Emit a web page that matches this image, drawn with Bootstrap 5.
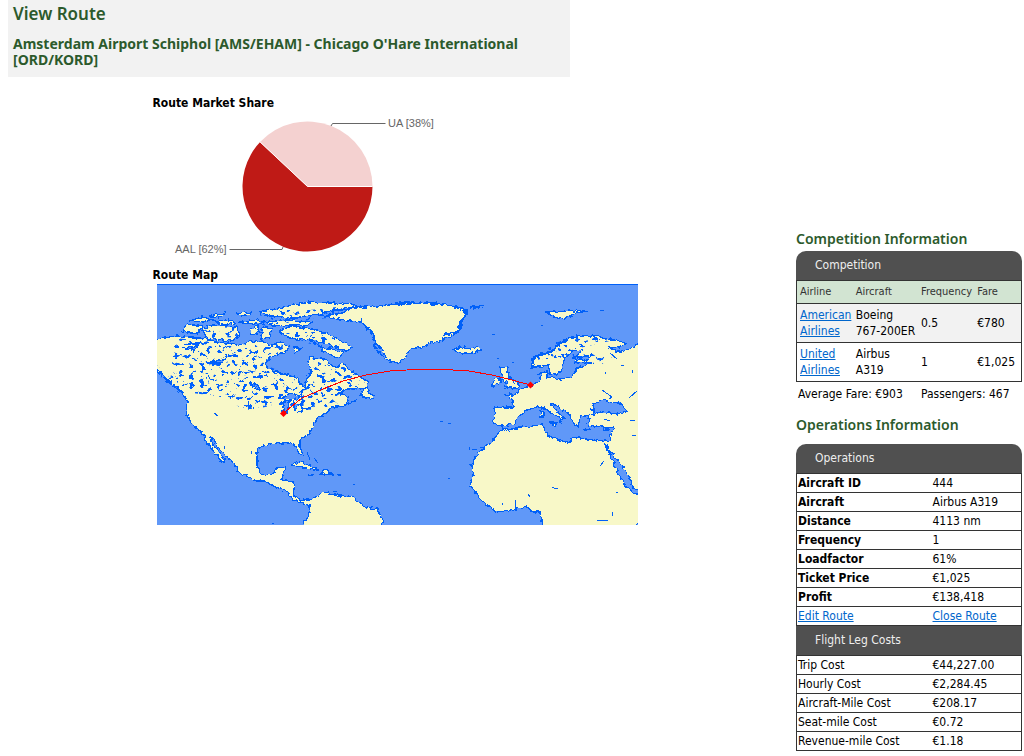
<!DOCTYPE html>
<html lang="en">
<head>
<meta charset="utf-8">
<meta name="viewport" content="width=device-width, initial-scale=1">
<title>View Route</title>
<link href="https://cdn.jsdelivr.net/npm/bootstrap@5.3.0/dist/css/bootstrap.min.css" rel="stylesheet">
<style>
body{font-family:"DejaVu Sans Condensed","DejaVu Sans",sans-serif;font-size:12px;line-height:16px;color:#000}
h1,h2,h3{font-family:"Noto Sans",sans-serif;font-weight:600;color:#2c5a2c;margin:0}
h1{font-size:17px;line-height:20px}
h2,h3{font-size:14px;line-height:16px}
h2{font-weight:700}
h4{font-size:12px;line-height:14px;font-weight:700;margin:0}
a{color:#06c}
.route-head{background:#f2f2f2;width:55%;min-width:562px;padding:4px 5px 9px}
.route-head h2{margin-top:12px}
.route-body{padding-top:19px}
.route-visuals{padding-right:10px}
.visuals{width:489px}
.visuals svg{display:block;max-width:100%}
.map-title{padding:2px 0}
.side{width:226px;padding-top:135px;margin-right:2px}
.ops-title{padding:15px 0 11px}
.bar{background:#505050;color:#eee;height:29px;line-height:29px;padding-left:19px}
.bar-top{border-radius:10px 10px 0 0}
.grid{width:100%;border-collapse:collapse;border:1px solid #333;table-layout:fixed}
.grid tr{border:1px solid #333}
.grid th,.grid td{padding:1px 0 1px 1px;height:19px;vertical-align:middle}
.fares th{font-weight:400;font-size:11px;color:#333;background:#d2e4d2;height:23px}
.fares th,.fares td{padding:3px 0 3px 3px}
.fares tr.odd td{background:#f2f2f2}
.totals{padding:4px 0 0 2px;gap:11px}
</style>
</head>
<body>
<main class="ps-2 pe-0">
<header class="route-head">
<h1>View Route</h1>
<h2>Amsterdam Airport Schiphol [AMS/EHAM] - Chicago O'Hare International [ORD/KORD]</h2>
</header>
<div class="route-body d-flex align-items-start">
<section class="route-visuals flex-fill d-flex justify-content-center">
<div class="visuals">
<h4>Route Market Share</h4>
<svg width="489" height="156" viewBox="153 110 489 156" role="img" aria-label="Market share pie chart">
<path d="M307.500 186.500H372.500A65 65 0 1 1 260.100 142z" fill="#bf1a16"/>
<path d="M307.500 186.500L260.100 142A65 65 0 0 1 372.500 186.500z" fill="#f4d1d0"/>
<path d="M372.500 186.500H307.500L260.100 142" fill="none" stroke="#fff"/>
<path d="M331 126l1.500-2.500H385.500M229.500 249.500H282l1-2.500" fill="none" stroke="#666"/>
<g font-family="Liberation Sans,sans-serif" font-size="11" fill="#666"><text x="388" y="127">UA [38%]</text><text x="175" y="253">AAL [62%]</text></g>
</svg>
<h4 class="map-title">Route Map</h4>
<svg class="ms-1" width="481" height="241" viewBox="157 284 481 241" role="img" aria-label="Map of the route from Amsterdam to Chicago">
<defs>
<filter id="rough" x="157" y="284" width="481" height="241" filterUnits="userSpaceOnUse"><feTurbulence type="fractalNoise" baseFrequency=".25" numOctaves="2" seed="4"/><feDisplacementMap in="SourceGraphic" scale="5" xChannelSelector="R" yChannelSelector="G"/></filter>
<filter id="lakes" x="157" y="284" width="481" height="241" filterUnits="userSpaceOnUse" color-interpolation-filters="sRGB"><feTurbulence type="fractalNoise" baseFrequency=".19 .24" numOctaves="3" seed="8"/><feColorMatrix values="0 0 0 0 0  0 0 0 0 .376  0 0 0 0 1  30 0 0 0 -18"/><feComposite in2="SourceGraphic" operator="in"/></filter>
</defs>
<path d="M157 284h481v241H157z" fill="#6098f8"/>
<g fill="#f8f8c8" stroke="#0060f8" stroke-width="1.300" shape-rendering="crispEdges">
<g filter="url(#rough)">
<path d="M150 339L165 338L178 336L190 338L203 338L215 342L228 343L240 346L250 341L262 342L272 345L282 342L290 346L285 352L277 354L272 357L265 363L266 367L272 370L287 375L298 378L300 385L305 387L307 378L312 372L308 362L310 357L317 358L327 360L330 364L337 368L343 363L350 370L360 377L368 382L367 388L347 389L335 396L343 393L348 398L345 404L357 400L343 406L330 408L327 413L318 417L315 423L310 433L300 440L300 447L303 455L298 453L297 447L292 443L277 443L263 445L257 450L257 465L260 472L265 475L273 474L277 468L285 467L282 480L293 482L294 497L300 500L310 500L317 496L325 492L335 495L353 497L365 507L377 509L383 520L382 530H300L308 517L310 506L302 503L293 500L288 492L273 486L265 481L257 481L247 476L237 472L236 465L227 457L218 448L215 440L211 438L213 445L219 452L225 461L222 462L215 453L207 443L203 433L190 422L186 413L187 400L183 395L177 388L170 383L162 375L150 366z"/>
<path d="M323 316L342 313L353 308L377 306L400 303L427 302L443 304L457 307L467 313L460 323L457 333L443 340L430 343L423 347L410 349L405 358L398 363L387 360L382 350L375 342L370 330L360 322L343 320z"/>
<path d="M183 331l4-7 16 3-6 7zM202 329l12-4 23 2 3 8-8 6-25-3zM249 331l8-6 3 7-8 2zM190 321l12-4 10 3-9 2zM208 316l17-3-4 4zM215 322l14-2 6 3-13 2zM236 313l16-1-7 4zM239 322l20-2 3 3-14 1zM263 322l25-2 24 2-7 4-32-1zM260 312l23-5 27-5 43 2 4 3-26 4-21 5-20 2-25-3zM263 327l9 2-3 8-8 2zM279 332l11-6 21 3 14 4 28 14-6 4-17-6-17-5-18-1-9-3zM293 347l8 2-6 4zM320 347l23 5-3 6-17-6z"/>
<path d="M453 350L460 347L470 349L478 347L481 350L472 353L462 354zM470 307l14-1-9 2zM545 312l13 0 10-2 20 1-13 2-5 3-8 3-9-3z"/>
<path d="M645 340L633 347L625 351L617 352L610 348L620 347L626 343L613 340L597 336L577 336L563 342L552 352L532 358L532 367L540 367L548 365L550 373L558 375L562 367L565 358L575 349L583 350L575 357L576 362L592 363L577 368L572 377L560 379L548 377L547 372L540 373L541 380L532 385L520 390L513 395L505 395L513 400L513 408L495 407L493 423L502 426L515 424L518 417L527 410L537 407L545 408L552 413L561 419L560 423L564 417L550 405L553 403L568 413L573 422L578 428L580 417L590 415L588 425L603 427L613 427L610 440L603 441L593 440L573 437L568 443L547 435L543 425L520 427L508 430L502 428L492 442L478 452L472 465L473 477L470 485L483 502L497 512L528 507L532 512L540 512L544 530H632L645 515z"/>
<path d="M500 368l8-1-1 6 5 7 8 5-2 3-13 0 3-4-5-4zM492 380l6-3 3 5-8 4zM360 395l5-8 4 6 6 4-4 2zM290 465l10-3 18 7-8 1-10-4zM320 474l5-5 8 5zM308 475h5M337 475h5"/>
<path d="M540 410l3 1v6h-2zM551 423h7l-2 3zM583 430h7M604 430l5-1-3 2z"/>
<path fill="#6098f8" d="M593 405L602 399L610 403L618 401L627 411L617 414L603 412L593 414zM604 442L608 449L620 463L630 478L633 488L645 490V496L633 493L623 482L617 470zM183 348l15-2-4 5zM207 362l20-3-6 4zM249 382l9 3 2 4-8-2zM283 412l1-10 6-2-3 12zM282 398l8-5 12 4-7 3zM292 401l6 4-3 6zM296 413l9-4M306 409l9-4M572 358l20-3-6 6z"/>
</g>
</g>
<path filter="url(#lakes)" d="M175 338l65 7 42-3 3 10-13 5-7 8 33 13 2 7 5 2 10-14-3-15 35 10 18 15-1 6-20 2-12 8 8 7-18 4-37-1-11-4-27 6-30-15-25-3-22-10zM260 310h50l45-5-20 12-40 5-35 4zM203 328l34-1 1 10-30 1zM280 332h44l24 15h-30zM533 360l22-18 45-6 10 5-35 8-12 10zM572 352l40 5-10 7h-27zM157 365l26 25 4 8-17-10-13-15z"/>
<g fill="none" stroke="#0060f8" shape-rendering="crispEdges">
<path d="M157 284.500h481" />
<path d="M360 321l14 14 1 12 8 10M455 307l12 4-5 11-4 10-15 3M385 305l25-2 36 1M532 366l2-9 18-6 12-11 15-4h20M157 368l13 15 13 9" stroke-width="2" filter="url(#rough)"/>
<path d="M440 421h3m5 2h3M469 447v3m3-1h5m3-2h4M448 478h2M353 484h2m-22 7h4M272 523h2M307 452l3 8m4-2l4 5M214 413l4 3M248 401v4m5 2v2M224 446v3m27 2v3M208 375l2 4M228 396h4M552 487l4 2 2-1M528 494l2 3M515 500v8M502 503v2M600 466l4-5M616 492h2M612 512v4M597 520h5M541 325h2M497 358h2M512 362h2M600 310h4M492 334h3M602 390l10 7-3 2M629 398l8-7M610 353l7 6m4 6h3m8 5v3M605 372v2M600 520l8 1M630 420h5M632 435h4M604 419l6 2"/>
<path d="M283.500 413L302 398L323 389L343 381L366 375L390 371L415 369.500H440L466 370.500L492 375L512 380L530.500 385" stroke="red" stroke-width="1"/>
</g>
<path d="M280 413.500l3.500-3.500 3.500 3.500-3.500 3.500zM527 385l3.500-3.500 3.500 3.500-3.500 3.500z" fill="red"/>
</svg>
</div>
</section>
<aside class="side flex-shrink-0">
<h3>Competition Information</h3>
<div class="bar bar-top mt-1">Competition</div>
<table class="grid fares">
<colgroup><col style="width:25%"><col style="width:29%"><col style="width:25%"><col style="width:21%"></colgroup>
<thead><tr><th scope="col">Airline</th><th scope="col">Aircraft</th><th scope="col">Frequency</th><th scope="col">Fare</th></tr></thead>
<tbody>
<tr class="odd"><td><a href="#">American Airlines</a></td><td>Boeing 767-200ER</td><td>0.5</td><td>€780</td></tr>
<tr><td><a href="#">United Airlines</a></td><td>Airbus A319</td><td>1</td><td>€1,025</td></tr>
</tbody>
</table>
<div class="totals d-flex"><span class="col-6">Average Fare: €903</span><span>Passengers: 467</span></div>
<h3 class="ops-title">Operations Information</h3>
<div class="bar bar-top">Operations</div>
<table class="grid">
<colgroup><col style="width:60%"><col></colgroup>
<tbody>
<tr><th scope="row">Aircraft ID</th><td>444</td></tr>
<tr><th scope="row">Aircraft</th><td>Airbus A319</td></tr>
<tr><th scope="row">Distance</th><td>4113 nm</td></tr>
<tr><th scope="row">Frequency</th><td>1</td></tr>
<tr><th scope="row">Loadfactor</th><td>61%</td></tr>
<tr><th scope="row">Ticket Price</th><td>€1,025</td></tr>
<tr><th scope="row">Profit</th><td>€138,418</td></tr>
<tr><td><a href="#">Edit Route</a></td><td><a href="#">Close Route</a></td></tr>
</tbody>
</table>
<div class="bar">Flight Leg Costs</div>
<table class="grid">
<colgroup><col style="width:60%"><col></colgroup>
<tbody>
<tr><td>Trip Cost</td><td>€44,227.00</td></tr>
<tr><td>Hourly Cost</td><td>€2,284.45</td></tr>
<tr><td>Aircraft-Mile Cost</td><td>€208.17</td></tr>
<tr><td>Seat-mile Cost</td><td>€0.72</td></tr>
<tr><td>Revenue-mile Cost</td><td>€1.18</td></tr>
</tbody>
</table>
</aside>
</div>
</main>
<script src="https://cdn.jsdelivr.net/npm/bootstrap@5.3.0/dist/js/bootstrap.bundle.min.js"></script>
</body>
</html>
